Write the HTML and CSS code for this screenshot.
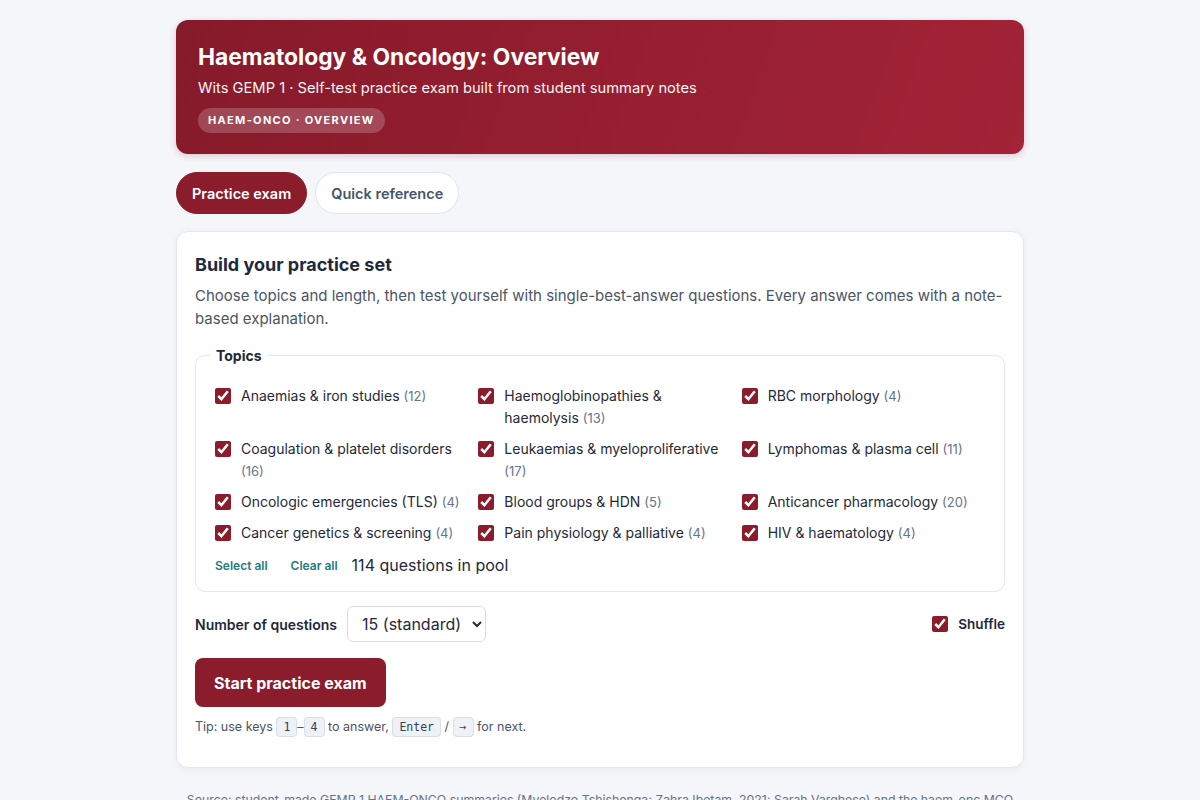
FILE: index.html
```html
<!DOCTYPE html>
<html lang="en">
  <head>
    <meta charset="UTF-8" />
    <meta name="viewport" content="width=device-width, initial-scale=1.0" />
    <title>Haematology &amp; Oncology: Overview</title>
    <link rel="stylesheet" href="styles.css">
  </head>
  <body>
    <div class="wrap">
      <header class="hero">
        <h1>Haematology &amp; Oncology: Overview</h1>
        <p class="sub">Wits GEMP 1 · Self-test practice exam built from student summary notes</p>
        <span class="badge">HAEM-ONCO · OVERVIEW</span>
      </header>

      <nav class="tabs">
        <button class="tab active">Practice exam</button>
        <button class="tab">Quick reference</button>
      </nav>

      <section class="card">
        <h2>Build your practice set</h2>
        <p class="lead">Choose topics and length, then test yourself with single-best-answer questions. Every answer comes with a note-based explanation.</p>

        <fieldset class="topics">
          <legend>Topics</legend>
          <div class="topic-grid">
            <label class="topic"><input type="checkbox" checked /><span>Anaemias &amp; iron studies <small>(12)</small></span></label>
            <label class="topic"><input type="checkbox" checked /><span>Haemoglobinopathies &amp; haemolysis <small>(13)</small></span></label>
            <label class="topic"><input type="checkbox" checked /><span>RBC morphology <small>(4)</small></span></label>
            <label class="topic"><input type="checkbox" checked /><span>Coagulation &amp; platelet disorders <small>(16)</small></span></label>
            <label class="topic"><input type="checkbox" checked /><span>Leukaemias &amp; myeloproliferative <small>(17)</small></span></label>
            <label class="topic"><input type="checkbox" checked /><span>Lymphomas &amp; plasma cell <small>(11)</small></span></label>
            <label class="topic"><input type="checkbox" checked /><span>Oncologic emergencies (TLS) <small>(4)</small></span></label>
            <label class="topic"><input type="checkbox" checked /><span>Blood groups &amp; HDN <small>(5)</small></span></label>
            <label class="topic"><input type="checkbox" checked /><span>Anticancer pharmacology <small>(20)</small></span></label>
            <label class="topic"><input type="checkbox" checked /><span>Cancer genetics &amp; screening <small>(4)</small></span></label>
            <label class="topic"><input type="checkbox" checked /><span>Pain physiology &amp; palliative <small>(4)</small></span></label>
            <label class="topic"><input type="checkbox" checked /><span>HIV &amp; haematology <small>(4)</small></span></label>
          </div>
          <div class="topic-actions">
            <button class="link-btn">Select all</button>
            <button class="link-btn">Clear all</button>
            <span class="pool">114 questions in pool</span>
          </div>
        </fieldset>

        <div class="options">
          <label class="count">
            Number of questions
            <select>
              <option>5 (quick)</option>
              <option selected>15 (standard)</option>
              <option>30 (long)</option>
            </select>
          </label>
          <label class="shuffle"><input type="checkbox" checked /> Shuffle</label>
        </div>

        <button class="start">Start practice exam</button>
        <p class="tip">Tip: use keys <kbd>1</kbd>–<kbd>4</kbd> to answer, <kbd>Enter</kbd> / <kbd>→</kbd> for next.</p>
      </section>

      <footer class="source">
        Source: student-made GEMP 1 HAEM-ONCO summaries (Mvelodzo Tshishonga; Zahra Ibetam, 2021; Sarah Varghese) and the haem-onc MCQ bank. Not official exam material.
      </footer>
    </div>
  </body>
</html>
```

FILE: styles.css
```css
body {
  margin: 0;
  background-color: #f4f6fa;
  font-family: Inter, "Noto Sans", "Liberation Sans", sans-serif;
  color: #1e293b;
}
.wrap {
  max-width: 848px;
  margin: 0 auto;
  padding: 20px 0 0;
}
.hero {
  background: linear-gradient(110deg, #861a2a 0%, #a32337 100%);
  color: #fff;
  border-radius: 12px;
  padding: 22px 22px 21px;
  box-shadow: 0 2px 6px rgba(120, 20, 40, 0.2);
}
.hero h1 {
  margin: 0;
  font-size: 22.8px;
  font-weight: 700;
  line-height: 30px;
}
.hero .sub {
  margin: 5px 0 9px;
  font-size: 14.7px;
  line-height: 22px;
  opacity: 0.95;
}
.badge {
  display: inline-block;
  background-color: rgba(255, 255, 255, 0.2);
  border-radius: 999px;
  padding: 5px 10px;
  font-size: 11px;
  font-weight: 700;
  letter-spacing: 0.12em;
  line-height: 15px;
}
.tabs {
  display: flex;
  gap: 8px;
  margin: 18px 0 17px;
}
.tab {
  font-family: inherit;
  font-size: 14.5px;
  font-weight: 600;
  height: 42px;
  padding: 0 15px;
  border-radius: 999px;
  border: 1px solid #dfe4ec;
  background-color: #fff;
  color: #475569;
}
.tab.active {
  background-color: #8b1c2c;
  border-color: #8b1c2c;
  color: #fff;
}
.card {
  background-color: #fff;
  border: 1px solid #e2e8f0;
  border-radius: 12px;
  padding: 21px 18px 33px;
  box-shadow: 0 2px 8px rgba(15, 23, 42, 0.05);
}
.card h2 {
  margin: 0;
  font-size: 18px;
  font-weight: 700;
  line-height: 24px;
  color: #1e293b;
}
.lead {
  margin: 7px 0 17px;
  font-size: 15px;
  line-height: 23px;
  color: #4b5563;
}
.topics {
  margin: 0;
  border: 1px solid #e2e8f0;
  border-radius: 10px;
  padding: 10px 17px 16px 19px;
}
.topics legend {
  font-size: 14px;
  font-weight: 700;
  padding: 0 6px;
  margin-left: -5px;
}
.topic-grid {
  display: grid;
  grid-template-columns: repeat(3, 1fr);
  gap: 9px 18px;
  margin-top: 11px;
}
.topic {
  display: flex;
  align-items: flex-start;
  gap: 10px;
  font-size: 14px;
  line-height: 22px;
  color: #1f2937;
}
.topic small {
  font-size: 13px;
  color: #64748b;
}
input[type="checkbox"] {
  width: 16px;
  height: 16px;
  margin: 3px 0 0;
  accent-color: #8b1c2c;
  flex-shrink: 0;
}
.topic-actions {
  display: flex;
  align-items: center;
  margin-top: 11px;
}
.link-btn {
  font-family: inherit;
  font-size: 12px;
  font-weight: 600;
  background: none;
  border: none;
  color: #1f7a7a;
  padding: 0;
  margin-right: 23px;
}
.link-btn + .link-btn {
  margin-right: 14px;
}
.pool {
  font-size: 16px;
  color: #1f2937;
}
.options {
  display: flex;
  justify-content: space-between;
  align-items: center;
  margin-top: 14px;
}
.count {
  display: flex;
  align-items: center;
  gap: 10px;
  font-size: 14px;
  font-weight: 600;
}
.count select {
  font-family: inherit;
  font-size: 16px;
  height: 36px;
  padding: 0 8px 0 10px;
  border: 1px solid #d6dce5;
  border-radius: 6px;
  background-color: #fff;
  color: #1f2937;
}
.shuffle {
  display: flex;
  align-items: center;
  gap: 10px;
  font-size: 13.5px;
  font-weight: 600;
}
.shuffle input {
  margin: 0;
}
.start {
  margin-top: 16px;
  font-family: inherit;
  font-size: 16px;
  font-weight: 700;
  background-color: #8b1c2c;
  color: #fff;
  border: none;
  border-radius: 8px;
  height: 49px;
  padding: 0 19px;
}
.tip {
  margin: 12px 0 0;
  font-size: 12.5px;
  color: #4b5563;
}
kbd {
  font-family: "DejaVu Sans Mono", "Liberation Mono", monospace;
  font-size: 11.5px;
  background-color: #eef2f6;
  border: 1px solid #d9dfe7;
  border-radius: 4px;
  padding: 2px 6px;
  color: #334155;
}
.source {
  text-align: center;
  font-size: 12.3px;
  line-height: 18px;
  color: #64748b;
  padding: 23px 0 20px;
}
```
